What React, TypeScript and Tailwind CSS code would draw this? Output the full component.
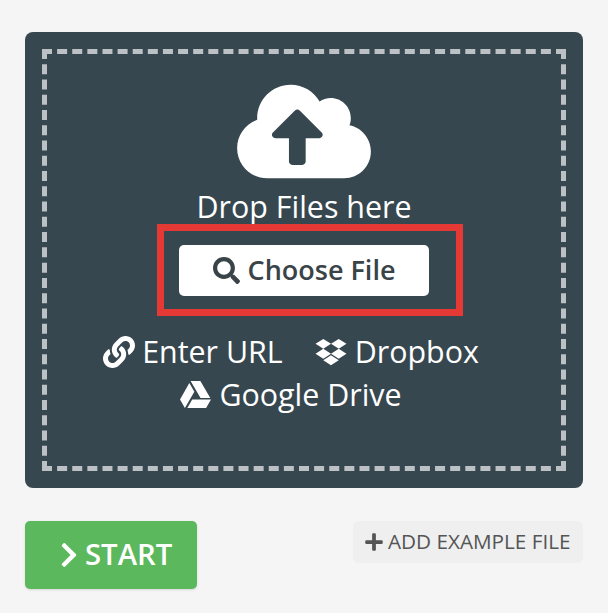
import { FaChevronRight, FaCloudUploadAlt, FaDropbox, FaGoogleDrive, FaLink, FaPlus, FaSearch } from "react-icons/fa";

const App = () => {
  return (
    <div className="w-[608px] h-[613px] bg-[#f5f5f5] px-[25px] pt-[32px] overflow-hidden font-['Open_Sans',sans-serif]">
      <div className="h-[456px] bg-[#37474f] rounded-[8px] p-[17px]">
        <div className="h-[422px] border-[5px] border-dashed border-[#bcc1c5] flex flex-col items-center pt-[24px] text-white">
          <FaCloudUploadAlt className="w-[134px] h-[107px]" />
          <div className="text-[30.4px] leading-[40px] mt-[2px]">Drop Files here</div>
          <div className="relative mt-[18px]">
            <button className="w-[250px] h-[51px] bg-white rounded-[5px] text-[#3a4348] text-[27px] font-semibold flex items-center justify-center gap-[8px]">
              <FaSearch className="w-[27px] h-[27px]" />
              <span>Choose File</span>
            </button>
            <div className="absolute left-[-22px] top-[-21px] w-[306px] h-[92px] border-[7px] border-[#e53935]" />
          </div>
          <div className="mt-[34px] mr-[26px] flex items-center gap-[32px] text-[30.4px] leading-[43px]">
            <span className="flex items-center gap-[7px]">
              <FaLink className="w-[32px] h-[32px]" />
              Enter URL
            </span>
            <span className="flex items-center gap-[8px]">
              <FaDropbox className="w-[32px] h-[30px]" />
              Dropbox
            </span>
          </div>
          <div className="mr-[26px] flex items-center gap-[8px] text-[30.4px] leading-[43px]">
            <FaGoogleDrive className="w-[31px] h-[31px]" />
            Google Drive
          </div>
        </div>
      </div>
      <div className="mt-[33px] flex items-start justify-between">
        <button className="w-[172px] h-[68px] pl-[34px] bg-[#5cb85c] rounded-[5px] text-white text-[29.3px] font-semibold flex items-center gap-[6px] shadow-sm">
          <FaChevronRight className="w-[20px] h-[28px]" />
          START
        </button>
        <button className="w-[230px] h-[42px] pl-[11px] bg-[#efefef] rounded-[5px] text-[#555555] text-[20.7px] flex items-center gap-[4px]">
          <FaPlus className="w-[20px] h-[20px]" />
          ADD EXAMPLE FILE
        </button>
      </div>
    </div>
  );
};

export default App;
